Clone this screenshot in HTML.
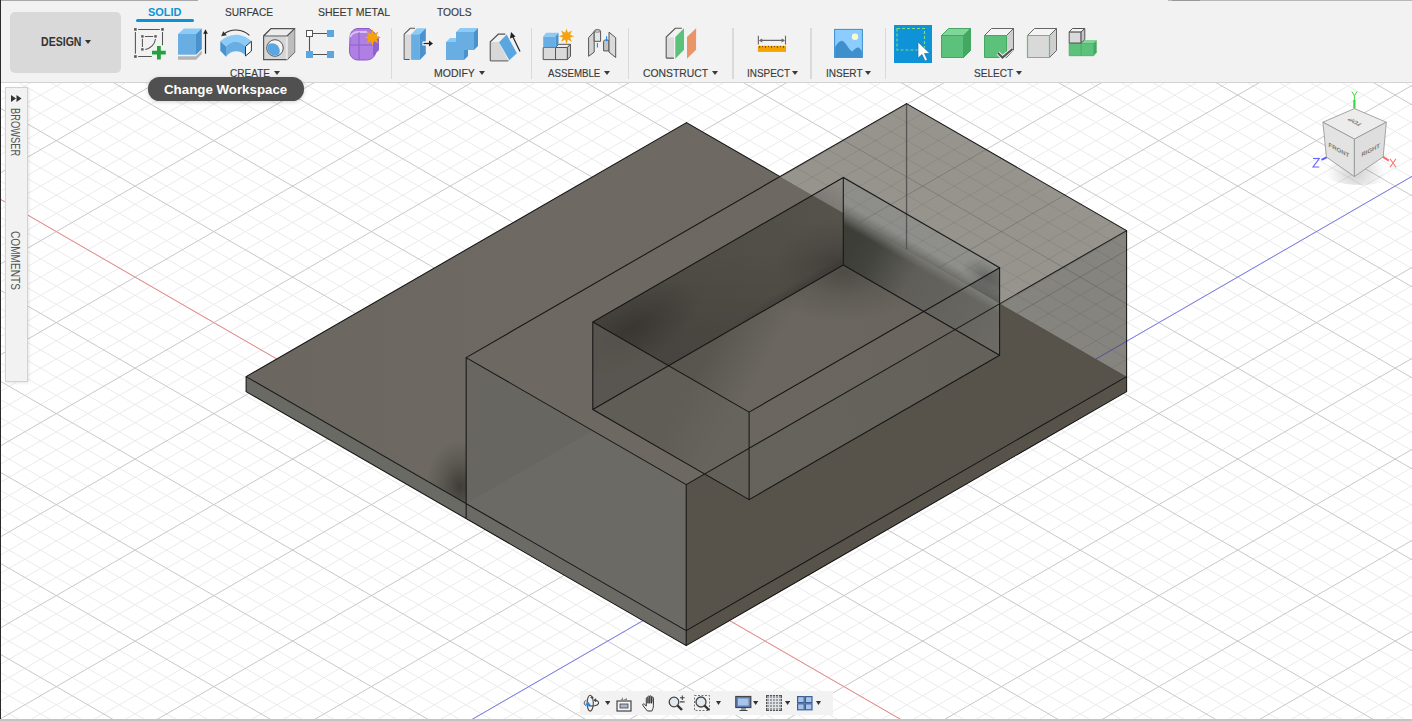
<!DOCTYPE html><html><head><meta charset="utf-8"><style>
html,body{margin:0;padding:0;width:1412px;height:721px;overflow:hidden;background:#fff;font-family:"Liberation Sans",sans-serif}
</style></head><body>
<div style="position:relative;width:1412px;height:721px;overflow:hidden">
<svg width="1412" height="636" viewBox="0 83 1412 636" style="position:absolute;left:0;top:83px">
<defs>
<linearGradient id="gPlateTop" gradientUnits="userSpaceOnUse" x1="246.1" y1="376.6" x2="1126.6" y2="376.6">
 <stop offset="0" stop-color="#6b6760"/><stop offset="0.35" stop-color="#6e6a63"/><stop offset="1" stop-color="#6d6962"/></linearGradient>
<radialGradient id="gAO1">
 <stop offset="0" stop-color="#2e2c29" stop-opacity="0.72"/><stop offset="0.5" stop-color="#2e2c29" stop-opacity="0.3"/><stop offset="1" stop-color="#2e2c29" stop-opacity="0"/></radialGradient>
<radialGradient id="gAO2">
 <stop offset="0" stop-color="#2e2c29" stop-opacity="0.36"/><stop offset="1" stop-color="#2e2c29" stop-opacity="0"/></radialGradient>
<linearGradient id="gZface" gradientUnits="userSpaceOnUse" x1="466" y1="400" x2="686" y2="600">
 <stop offset="0" stop-color="#656761"/><stop offset="1" stop-color="#6c6c67"/></linearGradient>
<linearGradient id="gBoxTop" gradientUnits="userSpaceOnUse" x1="466" y1="358" x2="906" y2="300">
 <stop offset="0" stop-color="#6d6862"/><stop offset="1" stop-color="#6d6862"/></linearGradient>
<linearGradient id="gFloor" gradientUnits="userSpaceOnUse" x1="592.8" y1="409.4" x2="999.6" y2="355.2">
 <stop offset="0" stop-color="#68645d"/><stop offset="0.45" stop-color="#6b6760"/><stop offset="1" stop-color="#69655e"/></linearGradient>
<linearGradient id="gFloor2" gradientUnits="userSpaceOnUse" x1="718.0" y1="337.2" x2="874.4" y2="427.4">
 <stop offset="0" stop-color="#000" stop-opacity="0.16"/><stop offset="0.3" stop-color="#000" stop-opacity="0"/></linearGradient>
<linearGradient id="gWallL" gradientUnits="userSpaceOnUse" x1="592.8" y1="321.9" x2="843.3" y2="177.5">
 <stop offset="0" stop-color="#4c4944"/><stop offset="0.3" stop-color="#4f4b45"/><stop offset="0.7" stop-color="#524e48"/><stop offset="1" stop-color="#57534d"/></linearGradient>
<linearGradient id="gWallL2" gradientUnits="userSpaceOnUse" x1="718.0" y1="249.7" x2="718.0" y2="337.2">
 <stop offset="0" stop-color="#000" stop-opacity="0"/><stop offset="1" stop-color="#000" stop-opacity="0.08"/></linearGradient>
<linearGradient id="gWallRbg" gradientUnits="userSpaceOnUse" x1="843.3" y1="177.5" x2="999.6" y2="267.7">
 <stop offset="0" stop-color="#8d8e8a"/><stop offset="0.5" stop-color="#8e8f8b"/><stop offset="1" stop-color="#8f908c"/></linearGradient>
<linearGradient id="gWallRpl" gradientUnits="userSpaceOnUse" x1="843.3" y1="265.0" x2="999.6" y2="355.2">
 <stop offset="0" stop-color="#3e3e39"/><stop offset="0.12" stop-color="#44443f"/><stop offset="0.36" stop-color="#5f5e59"/><stop offset="1" stop-color="#6c6b66"/></linearGradient>
<clipPath id="cpBoxBg"><polygon points="780.02,176.58 906.55,103.60 1126.60,230.60 1126.60,376.60"/></clipPath>
<clipPath id="cpPlateTop"><polygon points="246.10,376.60 686.50,122.60 780.02,176.58 466.15,357.60 466.15,503.60"/></clipPath>
<clipPath id="cpWallRbg"><polygon points="843.29,177.46 999.61,267.68 999.61,303.31 843.29,213.09"/></clipPath>
<linearGradient id="gWallLbg" gradientUnits="userSpaceOnUse" x1="843.3" y1="177.5" x2="823.3" y2="207.5">
 <stop offset="0" stop-color="#908d88"/><stop offset="1" stop-color="#7a7772"/></linearGradient>
<linearGradient id="gSoft" gradientUnits="userSpaceOnUse" x1="921.4" y1="258.2" x2="916.4" y2="266.9">
 <stop offset="0" stop-color="#8b8c88" stop-opacity="0.6"/><stop offset="1" stop-color="#8b8c88" stop-opacity="0"/></linearGradient>
<clipPath id="cpBelowBF"><polygon points="-0.00,880.36 1412.00,66.00 1412.00,721.00 0.00,721.00"/></clipPath>
<linearGradient id="gSoft2" gradientUnits="userSpaceOnUse" x1="921.4" y1="258.2" x2="926.4" y2="249.5">
 <stop offset="0" stop-color="#55544f" stop-opacity="0.55"/><stop offset="1" stop-color="#55544f" stop-opacity="0"/></linearGradient>
<clipPath id="cpFloor"><polygon points="592.79,409.44 843.29,264.96 999.61,355.18 749.11,499.66"/></clipPath>
<radialGradient id="gAO4"><stop offset="0" stop-color="#1e1c1a" stop-opacity="0.36"/><stop offset="0.5" stop-color="#1e1c1a" stop-opacity="0.14"/><stop offset="1" stop-color="#1e1c1a" stop-opacity="0"/></radialGradient>
<clipPath id="cpWallL"><polygon points="592.79,321.94 843.29,177.46 843.29,264.96 592.79,409.44"/></clipPath>
<radialGradient id="gAO3"><stop offset="0" stop-color="#252320" stop-opacity="0.42"/><stop offset="0.6" stop-color="#252320" stop-opacity="0.16"/><stop offset="1" stop-color="#252320" stop-opacity="0"/></radialGradient>
<clipPath id="cpWallR"><polygon points="843.29,177.46 999.61,267.68 999.61,355.18 843.29,264.96"/></clipPath>
<clipPath id="cpBelowPlateLine"><polygon points="0.00,-273.61 1412.00,541.32 1412.00,721.00 0.00,721.00"/></clipPath>
<clipPath id="cpAbovePlateLine"><polygon points="0.00,-273.61 1412.00,541.32 1412.00,0.00 0.00,0.00"/></clipPath>
</defs>
<rect x="0" y="83" width="1412" height="636" fill="#fff"/>
<path d="M0 -729.14L1412 86.62M0 -692.74L1412 123.02M0 -674.54L1412 141.22M0 -656.34L1412 159.42M0 -638.14L1412 177.62M0 -601.74L1412 214.02M0 -583.54L1412 232.22M0 -565.34L1412 250.42M0 -547.14L1412 268.62M0 -510.74L1412 305.02M0 -492.54L1412 323.22M0 -474.34L1412 341.42M0 -456.14L1412 359.62M0 -419.74L1412 396.02M0 -401.54L1412 414.22M0 -383.34L1412 432.42M0 -365.14L1412 450.62M0 -328.74L1412 487.02M0 -310.54L1412 505.22M0 -292.34L1412 523.42M0 -274.14L1412 541.62M0 -237.74L1412 578.02M0 -219.54L1412 596.22M0 -201.34L1412 614.42M0 -183.14L1412 632.62M0 -146.74L1412 669.02M0 -128.54L1412 687.22M0 -110.34L1412 705.42M0 -92.14L1412 723.62M0 -55.74L1412 760.02M0 -37.54L1412 778.22M0 -19.34L1412 796.42M0 -1.14L1412 814.62M0 35.26L1412 851.02M0 53.46L1412 869.22M0 71.66L1412 887.42M0 89.86L1412 905.62M0 126.26L1412 942.02M0 144.46L1412 960.22M0 162.66L1412 978.42M0 180.86L1412 996.62M0 217.26L1412 1033.02M0 235.46L1412 1051.22M0 253.66L1412 1069.42M0 271.86L1412 1087.62M0 308.26L1412 1124.02M0 326.46L1412 1142.22M0 344.66L1412 1160.42M0 362.86L1412 1178.62M0 399.26L1412 1215.02M0 417.46L1412 1233.22M0 435.66L1412 1251.42M0 453.86L1412 1269.62M0 490.26L1412 1306.02M0 508.46L1412 1324.22M0 526.66L1412 1342.42M0 544.86L1412 1360.62M0 581.26L1412 1397.02M0 599.46L1412 1415.22M0 617.66L1412 1433.42M0 635.86L1412 1451.62M0 672.26L1412 1488.02M0 690.46L1412 1506.22M0 708.66L1412 1524.42M0 100.34L1412 -715.42M0 118.54L1412 -697.22M0 136.74L1412 -679.02M0 154.94L1412 -660.82M0 191.34L1412 -624.42M0 209.54L1412 -606.22M0 227.74L1412 -588.02M0 245.94L1412 -569.82M0 282.34L1412 -533.42M0 300.54L1412 -515.22M0 318.74L1412 -497.02M0 336.94L1412 -478.82M0 373.34L1412 -442.42M0 391.54L1412 -424.22M0 409.74L1412 -406.02M0 427.94L1412 -387.82M0 464.34L1412 -351.42M0 482.54L1412 -333.22M0 500.74L1412 -315.02M0 518.94L1412 -296.82M0 555.34L1412 -260.42M0 573.54L1412 -242.22M0 591.74L1412 -224.02M0 609.94L1412 -205.82M0 646.34L1412 -169.42M0 664.54L1412 -151.22M0 682.74L1412 -133.02M0 700.94L1412 -114.82M0 737.34L1412 -78.42M0 755.54L1412 -60.22M0 773.74L1412 -42.02M0 791.94L1412 -23.82M0 828.34L1412 12.58M0 846.54L1412 30.78M0 864.74L1412 48.98M0 882.94L1412 67.18M0 919.34L1412 103.58M0 937.54L1412 121.78M0 955.74L1412 139.98M0 973.94L1412 158.18M0 1010.34L1412 194.58M0 1028.54L1412 212.78M0 1046.74L1412 230.98M0 1064.94L1412 249.18M0 1101.34L1412 285.58M0 1119.54L1412 303.78M0 1137.74L1412 321.98M0 1155.94L1412 340.18M0 1192.34L1412 376.58M0 1210.54L1412 394.78M0 1228.74L1412 412.98M0 1246.94L1412 431.18M0 1283.34L1412 467.58M0 1301.54L1412 485.78M0 1319.74L1412 503.98M0 1337.94L1412 522.18M0 1374.34L1412 558.58M0 1392.54L1412 576.78M0 1410.74L1412 594.98M0 1428.94L1412 613.18M0 1465.34L1412 649.58M0 1483.54L1412 667.78M0 1501.74L1412 685.98M0 1519.94L1412 704.18" stroke="#ebebeb" stroke-width="1" fill="none"/>
<path d="M0 -710.94L1412 104.82M0 -619.94L1412 195.82M0 -528.94L1412 286.82M0 -437.94L1412 377.82M0 -346.94L1412 468.82M0 -255.94L1412 559.82M0 -164.94L1412 650.82M0 -73.94L1412 741.82M0 17.06L1412 832.82M0 108.06L1412 923.82M0 199.06L1412 1014.82M0 290.06L1412 1105.82M0 381.06L1412 1196.82M0 472.06L1412 1287.82M0 563.06L1412 1378.82M0 654.06L1412 1469.82M0 82.14L1412 -733.62M0 173.14L1412 -642.62M0 264.14L1412 -551.62M0 355.14L1412 -460.62M0 446.14L1412 -369.62M0 537.14L1412 -278.62M0 628.14L1412 -187.62M0 719.14L1412 -96.62M0 810.14L1412 -5.62M0 901.14L1412 85.38M0 992.14L1412 176.38M0 1083.14L1412 267.38M0 1174.14L1412 358.38M0 1265.14L1412 449.38M0 1356.14L1412 540.38M0 1447.14L1412 631.38" stroke="#c8c8c8" stroke-width="1" fill="none"/>
<path d="M0 199.06L1412 1014.82" stroke="#f08a8a" stroke-width="1" fill="none"/>
<path d="M0 992.14L1412 176.38" stroke="#7d7df0" stroke-width="1" fill="none"/>
<polygon points="686.50,122.60 1126.60,376.60 686.20,630.60 246.10,376.60" fill="url(#gPlateTop)"/><polygon points="246.10,376.60 686.20,630.60 686.20,645.60 246.10,391.60" fill="#6a6a65"/><polygon points="686.20,630.60 1126.60,376.60 1126.60,391.60 686.20,645.60" fill="#57534b"/><polygon points="780.02,176.58 906.55,103.60 1126.60,230.60 1000.07,303.58" fill="#97948e"/><polygon points="1000.07,303.58 1126.60,230.60 1126.60,376.60" fill="#85847f"/><g clip-path="url(#cpBoxBg)"><path d="M0 -729.14L1412 86.62M0 -692.74L1412 123.02M0 -674.54L1412 141.22M0 -656.34L1412 159.42M0 -638.14L1412 177.62M0 -601.74L1412 214.02M0 -583.54L1412 232.22M0 -565.34L1412 250.42M0 -547.14L1412 268.62M0 -510.74L1412 305.02M0 -492.54L1412 323.22M0 -474.34L1412 341.42M0 -456.14L1412 359.62M0 -419.74L1412 396.02M0 -401.54L1412 414.22M0 -383.34L1412 432.42M0 -365.14L1412 450.62M0 -328.74L1412 487.02M0 -310.54L1412 505.22M0 -292.34L1412 523.42M0 -274.14L1412 541.62M0 -237.74L1412 578.02M0 -219.54L1412 596.22M0 -201.34L1412 614.42M0 -183.14L1412 632.62M0 -146.74L1412 669.02M0 -128.54L1412 687.22M0 -110.34L1412 705.42M0 -92.14L1412 723.62M0 -55.74L1412 760.02M0 -37.54L1412 778.22M0 -19.34L1412 796.42M0 -1.14L1412 814.62M0 35.26L1412 851.02M0 53.46L1412 869.22M0 71.66L1412 887.42M0 89.86L1412 905.62M0 126.26L1412 942.02M0 144.46L1412 960.22M0 162.66L1412 978.42M0 180.86L1412 996.62M0 217.26L1412 1033.02M0 235.46L1412 1051.22M0 253.66L1412 1069.42M0 271.86L1412 1087.62M0 308.26L1412 1124.02M0 326.46L1412 1142.22M0 344.66L1412 1160.42M0 362.86L1412 1178.62M0 399.26L1412 1215.02M0 417.46L1412 1233.22M0 435.66L1412 1251.42M0 453.86L1412 1269.62M0 490.26L1412 1306.02M0 508.46L1412 1324.22M0 526.66L1412 1342.42M0 544.86L1412 1360.62M0 581.26L1412 1397.02M0 599.46L1412 1415.22M0 617.66L1412 1433.42M0 635.86L1412 1451.62M0 672.26L1412 1488.02M0 690.46L1412 1506.22M0 708.66L1412 1524.42M0 100.34L1412 -715.42M0 118.54L1412 -697.22M0 136.74L1412 -679.02M0 154.94L1412 -660.82M0 191.34L1412 -624.42M0 209.54L1412 -606.22M0 227.74L1412 -588.02M0 245.94L1412 -569.82M0 282.34L1412 -533.42M0 300.54L1412 -515.22M0 318.74L1412 -497.02M0 336.94L1412 -478.82M0 373.34L1412 -442.42M0 391.54L1412 -424.22M0 409.74L1412 -406.02M0 427.94L1412 -387.82M0 464.34L1412 -351.42M0 482.54L1412 -333.22M0 500.74L1412 -315.02M0 518.94L1412 -296.82M0 555.34L1412 -260.42M0 573.54L1412 -242.22M0 591.74L1412 -224.02M0 609.94L1412 -205.82M0 646.34L1412 -169.42M0 664.54L1412 -151.22M0 682.74L1412 -133.02M0 700.94L1412 -114.82M0 737.34L1412 -78.42M0 755.54L1412 -60.22M0 773.74L1412 -42.02M0 791.94L1412 -23.82M0 828.34L1412 12.58M0 846.54L1412 30.78M0 864.74L1412 48.98M0 882.94L1412 67.18M0 919.34L1412 103.58M0 937.54L1412 121.78M0 955.74L1412 139.98M0 973.94L1412 158.18M0 1010.34L1412 194.58M0 1028.54L1412 212.78M0 1046.74L1412 230.98M0 1064.94L1412 249.18M0 1101.34L1412 285.58M0 1119.54L1412 303.78M0 1137.74L1412 321.98M0 1155.94L1412 340.18M0 1192.34L1412 376.58M0 1210.54L1412 394.78M0 1228.74L1412 412.98M0 1246.94L1412 431.18M0 1283.34L1412 467.58M0 1301.54L1412 485.78M0 1319.74L1412 503.98M0 1337.94L1412 522.18M0 1374.34L1412 558.58M0 1392.54L1412 576.78M0 1410.74L1412 594.98M0 1428.94L1412 613.18M0 1465.34L1412 649.58M0 1483.54L1412 667.78M0 1501.74L1412 685.98M0 1519.94L1412 704.18" stroke="#000" stroke-opacity="0.07" stroke-width="1" fill="none"/><path d="M0 -710.94L1412 104.82M0 -619.94L1412 195.82M0 -528.94L1412 286.82M0 -437.94L1412 377.82M0 -346.94L1412 468.82M0 -255.94L1412 559.82M0 -164.94L1412 650.82M0 -73.94L1412 741.82M0 17.06L1412 832.82M0 108.06L1412 923.82M0 199.06L1412 1014.82M0 290.06L1412 1105.82M0 381.06L1412 1196.82M0 472.06L1412 1287.82M0 563.06L1412 1378.82M0 654.06L1412 1469.82M0 82.14L1412 -733.62M0 173.14L1412 -642.62M0 264.14L1412 -551.62M0 355.14L1412 -460.62M0 446.14L1412 -369.62M0 537.14L1412 -278.62M0 628.14L1412 -187.62M0 719.14L1412 -96.62M0 810.14L1412 -5.62M0 901.14L1412 85.38M0 992.14L1412 176.38M0 1083.14L1412 267.38M0 1174.14L1412 358.38M0 1265.14L1412 449.38M0 1356.14L1412 540.38M0 1447.14L1412 631.38" stroke="#000" stroke-opacity="0.16" stroke-width="1" fill="none"/><path d="M0 992.14L1412 176.38" stroke="#3a3ad0" stroke-opacity="0.5" stroke-width="1" fill="none"/></g><polygon points="1000.07,303.58 1126.60,376.60 1126.60,391.60 686.20,645.60 686.20,484.60" fill="#57534b"/><polygon points="466.15,357.60 686.20,484.60 686.20,645.60 466.15,518.60" fill="#676661"/><polygon points="466.15,503.60 592.68,430.62 686.20,484.60 686.20,645.60 466.15,518.60" fill="#6b6a65"/><polygon points="466.15,357.60 780.02,176.58 1000.07,303.58 686.20,484.60" fill="url(#gBoxTop)"/><g clip-path="url(#cpPlateTop)"><ellipse cx="460.1" cy="486.6" rx="34" ry="46" fill="url(#gAO1)"/></g><polygon points="592.79,409.44 843.29,264.96 999.61,355.18 749.11,499.66" fill="url(#gFloor)"/><polygon points="592.79,409.44 843.29,264.96 999.61,355.18 749.11,499.66" fill="url(#gFloor2)"/><g clip-path="url(#cpFloor)"><ellipse cx="843.3" cy="273.0" rx="90" ry="48" fill="url(#gAO4)"/></g><polygon points="592.79,321.94 843.29,177.46 843.29,264.96 592.79,409.44" fill="url(#gWallL)"/><polygon points="592.79,321.94 843.29,177.46 843.29,264.96 592.79,409.44" fill="url(#gWallL2)"/><g clip-path="url(#cpWallL)"><ellipse cx="632.8" cy="327.9" rx="75" ry="34" transform="rotate(-30 632.8 327.9)" fill="url(#gAO3)"/><ellipse cx="798.3" cy="291.0" rx="80" ry="9" transform="rotate(-30 798.3 291.0)" fill="url(#gAO2)"/></g><polygon points="812.41,195.27 843.29,177.46 843.29,213.09" fill="url(#gWallLbg)"/><g clip-path="url(#cpWallL)"><ellipse cx="843.3" cy="265.0" rx="70" ry="45" fill="url(#gAO4)"/></g><polygon points="843.29,177.46 999.61,267.68 999.61,303.31 843.29,213.09" fill="url(#gWallRbg)"/><g clip-path="url(#cpWallRbg)"><path d="M0 -729.14L1412 86.62M0 -692.74L1412 123.02M0 -674.54L1412 141.22M0 -656.34L1412 159.42M0 -638.14L1412 177.62M0 -601.74L1412 214.02M0 -583.54L1412 232.22M0 -565.34L1412 250.42M0 -547.14L1412 268.62M0 -510.74L1412 305.02M0 -492.54L1412 323.22M0 -474.34L1412 341.42M0 -456.14L1412 359.62M0 -419.74L1412 396.02M0 -401.54L1412 414.22M0 -383.34L1412 432.42M0 -365.14L1412 450.62M0 -328.74L1412 487.02M0 -310.54L1412 505.22M0 -292.34L1412 523.42M0 -274.14L1412 541.62M0 -237.74L1412 578.02M0 -219.54L1412 596.22M0 -201.34L1412 614.42M0 -183.14L1412 632.62M0 -146.74L1412 669.02M0 -128.54L1412 687.22M0 -110.34L1412 705.42M0 -92.14L1412 723.62M0 -55.74L1412 760.02M0 -37.54L1412 778.22M0 -19.34L1412 796.42M0 -1.14L1412 814.62M0 35.26L1412 851.02M0 53.46L1412 869.22M0 71.66L1412 887.42M0 89.86L1412 905.62M0 126.26L1412 942.02M0 144.46L1412 960.22M0 162.66L1412 978.42M0 180.86L1412 996.62M0 217.26L1412 1033.02M0 235.46L1412 1051.22M0 253.66L1412 1069.42M0 271.86L1412 1087.62M0 308.26L1412 1124.02M0 326.46L1412 1142.22M0 344.66L1412 1160.42M0 362.86L1412 1178.62M0 399.26L1412 1215.02M0 417.46L1412 1233.22M0 435.66L1412 1251.42M0 453.86L1412 1269.62M0 490.26L1412 1306.02M0 508.46L1412 1324.22M0 526.66L1412 1342.42M0 544.86L1412 1360.62M0 581.26L1412 1397.02M0 599.46L1412 1415.22M0 617.66L1412 1433.42M0 635.86L1412 1451.62M0 672.26L1412 1488.02M0 690.46L1412 1506.22M0 708.66L1412 1524.42M0 100.34L1412 -715.42M0 118.54L1412 -697.22M0 136.74L1412 -679.02M0 154.94L1412 -660.82M0 191.34L1412 -624.42M0 209.54L1412 -606.22M0 227.74L1412 -588.02M0 245.94L1412 -569.82M0 282.34L1412 -533.42M0 300.54L1412 -515.22M0 318.74L1412 -497.02M0 336.94L1412 -478.82M0 373.34L1412 -442.42M0 391.54L1412 -424.22M0 409.74L1412 -406.02M0 427.94L1412 -387.82M0 464.34L1412 -351.42M0 482.54L1412 -333.22M0 500.74L1412 -315.02M0 518.94L1412 -296.82M0 555.34L1412 -260.42M0 573.54L1412 -242.22M0 591.74L1412 -224.02M0 609.94L1412 -205.82M0 646.34L1412 -169.42M0 664.54L1412 -151.22M0 682.74L1412 -133.02M0 700.94L1412 -114.82M0 737.34L1412 -78.42M0 755.54L1412 -60.22M0 773.74L1412 -42.02M0 791.94L1412 -23.82M0 828.34L1412 12.58M0 846.54L1412 30.78M0 864.74L1412 48.98M0 882.94L1412 67.18M0 919.34L1412 103.58M0 937.54L1412 121.78M0 955.74L1412 139.98M0 973.94L1412 158.18M0 1010.34L1412 194.58M0 1028.54L1412 212.78M0 1046.74L1412 230.98M0 1064.94L1412 249.18M0 1101.34L1412 285.58M0 1119.54L1412 303.78M0 1137.74L1412 321.98M0 1155.94L1412 340.18M0 1192.34L1412 376.58M0 1210.54L1412 394.78M0 1228.74L1412 412.98M0 1246.94L1412 431.18M0 1283.34L1412 467.58M0 1301.54L1412 485.78M0 1319.74L1412 503.98M0 1337.94L1412 522.18M0 1374.34L1412 558.58M0 1392.54L1412 576.78M0 1410.74L1412 594.98M0 1428.94L1412 613.18M0 1465.34L1412 649.58M0 1483.54L1412 667.78M0 1501.74L1412 685.98M0 1519.94L1412 704.18" stroke="#000" stroke-opacity="0.06" stroke-width="1" fill="none"/><path d="M0 -710.94L1412 104.82M0 -619.94L1412 195.82M0 -528.94L1412 286.82M0 -437.94L1412 377.82M0 -346.94L1412 468.82M0 -255.94L1412 559.82M0 -164.94L1412 650.82M0 -73.94L1412 741.82M0 17.06L1412 832.82M0 108.06L1412 923.82M0 199.06L1412 1014.82M0 290.06L1412 1105.82M0 381.06L1412 1196.82M0 472.06L1412 1287.82M0 563.06L1412 1378.82M0 654.06L1412 1469.82M0 82.14L1412 -733.62M0 173.14L1412 -642.62M0 264.14L1412 -551.62M0 355.14L1412 -460.62M0 446.14L1412 -369.62M0 537.14L1412 -278.62M0 628.14L1412 -187.62M0 719.14L1412 -96.62M0 810.14L1412 -5.62M0 901.14L1412 85.38M0 992.14L1412 176.38M0 1083.14L1412 267.38M0 1174.14L1412 358.38M0 1265.14L1412 449.38M0 1356.14L1412 540.38M0 1447.14L1412 631.38" stroke="#000" stroke-opacity="0.14" stroke-width="1" fill="none"/></g><polygon points="843.29,213.09 999.61,303.31 999.61,355.18 843.29,264.96" fill="url(#gWallRpl)"/><g clip-path="url(#cpWallR)"><polygon points="843.29,213.09 999.61,303.31 999.61,317.31 843.29,227.09" fill="url(#gSoft)"/><polygon points="843.29,213.09 999.61,303.31 999.61,291.31 843.29,201.09" fill="url(#gSoft2)"/></g><g clip-path="url(#cpWallR)"><ellipse cx="985.6" cy="275.7" rx="26" ry="14" transform="rotate(30 985.6 275.7)" fill="url(#gAO2)"/></g><polygon points="592.79,321.94 749.11,412.16 749.11,499.66 592.79,409.44" fill="#66625b" fill-opacity="0.6"/><g clip-path="url(#cpBelowBF)"><polygon points="592.79,409.44 843.29,264.96 999.61,355.18 749.11,499.66" fill="#000" fill-opacity="0.04"/></g><g clip-path="url(#cpAbovePlateLine)"><polygon points="749.11,412.16 999.61,267.68 999.61,355.18 749.11,499.66" fill="#4f514d" fill-opacity="0.5"/></g>
<path d="M906.55 103.60L906.55 249.60" stroke="#555" stroke-width="1.3" fill="none"/>
<path d="M246.10 376.60L686.50 122.60M686.50 122.60L780.02 176.58M246.10 376.60L246.10 391.60M246.10 391.60L686.20 645.60M686.20 645.60L1126.60 391.60M1126.60 391.60L1126.60 376.60M246.10 376.60L686.20 630.60M686.20 630.60L1126.60 376.60M466.15 357.60L906.55 103.60M906.55 103.60L1126.60 230.60M1126.60 230.60L686.20 484.60M686.20 484.60L466.15 357.60M466.15 357.60L466.15 518.60M686.20 484.60L686.20 645.60M1126.60 230.60L1126.60 376.60M592.79 321.94L843.29 177.46M843.29 177.46L999.61 267.68M999.61 267.68L749.11 412.16M749.11 412.16L592.79 321.94M592.79 321.94L592.79 409.44M843.29 177.46L843.29 264.96M999.61 267.68L999.61 355.18M749.11 412.16L749.11 499.66M592.79 409.44L843.29 264.96M843.29 264.96L999.61 355.18M999.61 355.18L749.11 499.66M749.11 499.66L592.79 409.44" stroke="#161616" stroke-width="1.05" fill="none" stroke-linecap="round"/>
</svg>
<div style="position:absolute;left:0;top:0;width:1412px;height:82px;background:#f2f2f2;border-bottom:1px solid #d3d3d3"></div><div style="position:absolute;left:0;top:0;width:198px;height:1px;background:#a8a8a8"></div><div style="position:absolute;left:1168px;top:0;width:244px;height:1px;background:#b8b8b8"></div><div style="position:absolute;left:1172px;top:0;width:28px;height:1px;background:#999"></div><div style="position:absolute;left:10px;top:11.5px;width:111px;height:61px;border-radius:5px;background:#d9d9d9"></div><div style="position:absolute;left:40.50px;top:35.60px;font-size:12px;line-height:12px;white-space:nowrap;color:#333;font-weight:bold;transform:scaleX(0.8803);transform-origin:0 0;">DESIGN</div><svg style="position:absolute;left:84.5px;top:40px" width="6" height="4"><path d="M0 0H6L3.0 4Z" fill="#333"/></svg><div style="position:absolute;left:147.60px;top:7.18px;font-size:11.5px;line-height:11.5px;white-space:nowrap;color:#0a94d6;font-weight:bold;transform:scaleX(0.9533);transform-origin:0 0;">SOLID</div><div style="position:absolute;left:135.5px;top:19.2px;width:58.5px;height:3px;border-radius:1.5px;background:#0a94d6"></div><div style="position:absolute;left:225.40px;top:6.98px;font-size:11.5px;line-height:11.5px;white-space:nowrap;color:#3a3a3a;font-weight:normal;transform:scaleX(0.8837);transform-origin:0 0;-webkit-text-stroke:0.15px #3a3a3a">SURFACE</div><div style="position:absolute;left:318.40px;top:6.98px;font-size:11.5px;line-height:11.5px;white-space:nowrap;color:#3a3a3a;font-weight:normal;transform:scaleX(0.9135);transform-origin:0 0;-webkit-text-stroke:0.15px #3a3a3a">SHEET METAL</div><div style="position:absolute;left:437.00px;top:6.98px;font-size:11.5px;line-height:11.5px;white-space:nowrap;color:#3a3a3a;font-weight:normal;transform:scaleX(0.8949);transform-origin:0 0;-webkit-text-stroke:0.15px #3a3a3a">TOOLS</div><div style="position:absolute;left:390.5px;top:27.5px;width:1.5px;height:51px;background:#dadada"></div><div style="position:absolute;left:530.5px;top:27.5px;width:1.5px;height:51px;background:#dadada"></div><div style="position:absolute;left:627.5px;top:27.5px;width:1.5px;height:51px;background:#dadada"></div><div style="position:absolute;left:732.0px;top:27.5px;width:1.5px;height:51px;background:#dadada"></div><div style="position:absolute;left:810.2px;top:27.5px;width:1.5px;height:51px;background:#dadada"></div><div style="position:absolute;left:884.8px;top:27.5px;width:1.5px;height:51px;background:#dadada"></div><div style="position:absolute;left:229.80px;top:67.68px;font-size:11.5px;line-height:11.5px;white-space:nowrap;color:#3a3a3a;font-weight:normal;transform:scaleX(0.8735);transform-origin:0 0;-webkit-text-stroke:0.15px #3a3a3a">CREATE</div><svg style="position:absolute;left:273.5px;top:70.8px" width="6" height="4"><path d="M0 0H6L3.0 4Z" fill="#3a3a3a"/></svg><div style="position:absolute;left:433.60px;top:67.68px;font-size:11.5px;line-height:11.5px;white-space:nowrap;color:#3a3a3a;font-weight:normal;transform:scaleX(0.9123);transform-origin:0 0;-webkit-text-stroke:0.15px #3a3a3a">MODIFY</div><svg style="position:absolute;left:478.8px;top:70.8px" width="6" height="4"><path d="M0 0H6L3.0 4Z" fill="#3a3a3a"/></svg><div style="position:absolute;left:548.40px;top:67.68px;font-size:11.5px;line-height:11.5px;white-space:nowrap;color:#3a3a3a;font-weight:normal;transform:scaleX(0.8436);transform-origin:0 0;-webkit-text-stroke:0.15px #3a3a3a">ASSEMBLE</div><svg style="position:absolute;left:604.4px;top:70.8px" width="6" height="4"><path d="M0 0H6L3.0 4Z" fill="#3a3a3a"/></svg><div style="position:absolute;left:642.80px;top:67.68px;font-size:11.5px;line-height:11.5px;white-space:nowrap;color:#3a3a3a;font-weight:normal;transform:scaleX(0.9032);transform-origin:0 0;-webkit-text-stroke:0.15px #3a3a3a">CONSTRUCT</div><svg style="position:absolute;left:712.4px;top:70.8px" width="6" height="4"><path d="M0 0H6L3.0 4Z" fill="#3a3a3a"/></svg><div style="position:absolute;left:746.70px;top:67.68px;font-size:11.5px;line-height:11.5px;white-space:nowrap;color:#3a3a3a;font-weight:normal;transform:scaleX(0.8627);transform-origin:0 0;-webkit-text-stroke:0.15px #3a3a3a">INSPECT</div><svg style="position:absolute;left:791.5px;top:70.8px" width="6" height="4"><path d="M0 0H6L3.0 4Z" fill="#3a3a3a"/></svg><div style="position:absolute;left:825.50px;top:67.68px;font-size:11.5px;line-height:11.5px;white-space:nowrap;color:#3a3a3a;font-weight:normal;transform:scaleX(0.8698);transform-origin:0 0;-webkit-text-stroke:0.15px #3a3a3a">INSERT</div><svg style="position:absolute;left:865px;top:70.8px" width="6" height="4"><path d="M0 0H6L3.0 4Z" fill="#3a3a3a"/></svg><div style="position:absolute;left:973.50px;top:67.68px;font-size:11.5px;line-height:11.5px;white-space:nowrap;color:#3a3a3a;font-weight:normal;transform:scaleX(0.8740);transform-origin:0 0;-webkit-text-stroke:0.15px #3a3a3a">SELECT</div><svg style="position:absolute;left:1015.5px;top:70.8px" width="6" height="4"><path d="M0 0H6L3.0 4Z" fill="#3a3a3a"/></svg><svg style="position:absolute;left:134px;top:28px;overflow:visible" width="34" height="34" viewBox="0 0 34 34">
<g fill="none" stroke="#555" stroke-width="1.05">
<path d="M4.2 1.4H25.8M1.4 3.9V25.7M4.2 28.5H17.8M28.5 3.9V17.3"/>
<path d="M10.9 8.4H19.1M8.4 10.8V19M11.2 21.4C16.5 20.5 20.8 16.3 21.5 11"/>
</g>
<g fill="#555"><rect x="0.1" y="0.1" width="2.6" height="2.6"/><rect x="27.2" y="0.1" width="2.6" height="2.6"/><rect x="0.1" y="27.2" width="2.6" height="2.6"/>
<rect x="7.2" y="7.2" width="2.4" height="2.4"/><rect x="20.3" y="7.2" width="2.4" height="2.4"/><rect x="7.2" y="20.2" width="2.4" height="2.4"/></g>
<path d="M24.9 17.9V31.6M18 24.7H31.8" stroke="#22a13f" stroke-width="3.8"/>
</svg><svg style="position:absolute;left:178px;top:28px;overflow:visible" width="32" height="34" viewBox="0 0 32 34">
<path d="M0 28.2H18L23.8 22.5V26L18 31.7H0Z" fill="#b4b4b4"/>
<path d="M0 6H18V26.7H0Z" fill="#68aee3"/>
<path d="M0 6L6 0.4H23.8L18 6Z" fill="#8ccbf5"/>
<path d="M18 6L23.8 0.4V21L18 26.7Z" fill="#4a92cc"/>
<path d="M27.5 25.7V4" stroke="#222" stroke-width="1.2"/><path d="M25.2 5.8L27.5 1.2L29.8 5.8Z" fill="#222"/>
</svg><svg style="position:absolute;left:220px;top:28px;overflow:visible" width="34" height="34" viewBox="0 0 34 34">
<path d="M29.4 7.4C22 0.5 11 0.5 4 6" fill="none" stroke="#333" stroke-width="1.1"/><path d="M1.2 8.2L3.2 3.2L6.8 7.2Z" fill="#333"/>
<path d="M0.3 13.3C9 4.5 23 4.5 31.4 13.3L25.5 18.5C20 12 11 12 6 18.5Z" fill="#8ccbf5"/>
<path d="M6 18.5C11 12 20 12 25.5 18.5V27.5C20 21.5 11 22 6 28.7Z" fill="#68aee3"/>
<path d="M0.3 13.3L6 18.5V28.7L0.3 22.7Z" fill="#4a92cc"/>
<path d="M25.5 18.5L31.4 13.3V23L25.5 28Z" fill="#fff" stroke="#333" stroke-width="1"/>
</svg><svg style="position:absolute;left:263px;top:28px;overflow:visible" width="33" height="33" viewBox="0 0 33 33">
<path d="M0.6 8L8 0.6H31.6V24L24 31.6H0.6Z" fill="#d6d6d6" stroke="#555" stroke-width="1.2"/>
<path d="M24 8L31.6 0.6V24L24 31.6Z" fill="#bdbdbd"/>
<path d="M0.6 8H24V31.6" fill="none" stroke="#fff" stroke-width="1"/>
<path d="M0.6 8L8 0.6H31.6L24 8Z" fill="#ededed" stroke="#555" stroke-width="1.2" stroke-linejoin="round"/>
<defs><clipPath id="holeclip"><circle cx="12" cy="20" r="7.6"/></clipPath></defs>
<circle cx="12" cy="20" r="8.3" fill="#f4f4f4" stroke="#555" stroke-width="1"/>
<g clip-path="url(#holeclip)"><circle cx="9.0" cy="23.0" r="7.8" fill="#5aa6e0"/></g>
</svg><svg style="position:absolute;left:306px;top:30px;overflow:visible" width="29" height="29" viewBox="0 0 29 29">
<path d="M7 3.5H21M7 24.5H21M3.5 7V21" stroke="#555" stroke-width="1.1"/>
<rect x="0.5" y="0.5" width="6" height="6" fill="#fff" stroke="#555" stroke-width="1"/>
<rect x="21" y="0" width="7" height="7" fill="#5aa6e0"/><rect x="0" y="21" width="7" height="7" fill="#5aa6e0"/><rect x="21" y="21" width="7" height="7" fill="#5aa6e0"/>
</svg><svg style="position:absolute;left:349px;top:28px;overflow:visible" width="33" height="33" viewBox="0 0 33 33">
<path d="M1 9C1 4 5 0.5 9 0.5H20L27 6V22C27 28 23 32 17 32H9C4 32 0.5 28 0.5 23Z" fill="#b07fe4" stroke="#8a5bc8" stroke-width="1"/>
<path d="M1 9C3 5 6 4 9 4H18" fill="none" stroke="#d9c0f5" stroke-width="2"/>
<path d="M10 4V32M1 17H25" stroke="#8a5bc8" stroke-width="0.9"/>
<path d="M24 13L30 8V22L24 28Z" fill="#9060cf"/>
<path d="M23.5 1L25 6L29.5 3.5L27.5 8L32 9.5L27.5 11L29.5 15.5L25 13L23.5 18L22 13L17.5 15.5L19.5 11L15 9.5L19.5 8L17.5 3.5L22 6Z" fill="#f5a30c"/>
</svg><svg style="position:absolute;left:400px;top:24px;overflow:visible" width="34" height="38" viewBox="0 0 34 38">
<path d="M4.2 35.4V10.2L10.2 4.25H15M4.2 35.4H9.7" fill="none" stroke="#555" stroke-width="1.1"/>
<path d="M4.8 10.5H11V35H4.8Z" fill="#dadada"/>
<path d="M11.1 10.2H19.9V35.9H11.1Z" fill="#68aee3"/>
<path d="M11.1 10.2L16.8 4.25H25.8L19.9 10.2Z" fill="#8ccbf5"/>
<path d="M19.9 10.2L25.8 4.25V29.7L19.9 35.9Z" fill="#4a92cc"/>
<rect x="22.5" y="17.5" width="4" height="4" fill="#fff"/>
<path d="M23.5 19.5H30" stroke="#222" stroke-width="1.3"/><path d="M29 16.5L33 19.5L29 22.5Z" fill="#222"/>
</svg><svg style="position:absolute;left:446px;top:28px;overflow:visible" width="33" height="33" viewBox="0 0 33 33">
<path d="M10 4H28V22H10Z" fill="#68aee3"/><path d="M10 4L14 0H32L28 4Z" fill="#8ccbf5"/><path d="M28 4L32 0V18L28 22Z" fill="#4a92cc"/>
<path d="M0 14H18V32H0Z" fill="#68aee3"/><path d="M0 14L4 10H10V14Z" fill="#8ccbf5"/><path d="M18 22H22V28L18 32Z" fill="#4a92cc"/>
<path d="M10 14H28V22H18V14" fill="#68aee3"/>
</svg><svg style="position:absolute;left:489px;top:28px;overflow:visible" width="33" height="34" viewBox="0 0 33 34">
<path d="M1.3 32.8V13.7L9.3 6.2H16.3" fill="none" stroke="#555" stroke-width="1.2"/>
<path d="M1.3 32.8H19.4" stroke="#555" stroke-width="1.2"/>
<path d="M1.9 14H10L19 32.2H1.9Z" fill="#d8d8d8"/>
<path d="M10.1 14.2L17.7 6.6L27.9 25.2L20.3 32.3Z" fill="#5aa6e0"/>
<path d="M31 23.5L23.5 8" stroke="#222" stroke-width="1.2"/><path d="M22 4L21 10.5L26.5 8.5Z" fill="#222"/>
</svg><svg style="position:absolute;left:542px;top:28px;overflow:visible" width="34" height="34" viewBox="0 0 34 34">
<path d="M13.5 19.5L16.8 16.3H28.5L25.3 19.5Z" fill="#ececec" stroke="#555" stroke-width="1" stroke-linejoin="round"/>
<path d="M25.3 19.5L28.5 16.3V28.3L25.3 31.6Z" fill="#c4c4c4" stroke="#555" stroke-width="1" stroke-linejoin="round"/>
<path d="M1.2 19.5H25.3V31.6H1.2Z" fill="#dadada" stroke="#555" stroke-width="1"/>
<path d="M13.5 19.5V31.6" stroke="#555" stroke-width="1"/>
<path d="M1.2 8.4H13.5V19.5H1.2Z" fill="#68aee3"/><path d="M1.2 8.4L4.1 4.8H16.5L13.5 8.4Z" fill="#8ccbf5"/><path d="M13.5 8.4L16.5 4.8V16.3L13.5 19.5Z" fill="#4a92cc"/>
<path d="M24.5 0.4L25.9 4.8L29.9 2.6L28.1 6.8L32.3 8.2L28.1 9.6L29.9 13.8L25.9 11.6L24.5 16L23.1 11.6L19.1 13.8L20.9 9.6L16.7 8.2L20.9 6.8L19.1 2.6L23.1 4.8Z" fill="#f5a30c"/>
</svg><svg style="position:absolute;left:588px;top:28px;overflow:visible" width="30" height="34" viewBox="0 0 30 34">
<path d="M0.6 9.7L6.2 3.5V24.1L0.6 28.3Z" fill="#d4d4d4" stroke="#555" stroke-width="1" stroke-linejoin="round"/>
<path d="M6.2 3.2C6.2 1.4 12.6 1.4 12.6 3.2V13.3H6.2Z" fill="#e4e4e4" stroke="#555" stroke-width="1"/>
<ellipse cx="9.4" cy="3" rx="3.2" ry="1.1" fill="#f4f4f4" stroke="#555" stroke-width="0.8"/>
<path d="M15.6 13.2C15.6 11.4 21 11.4 21 13.2V22.9H15.6Z" fill="#c4c4c4" stroke="#555" stroke-width="1"/>
<path d="M21 4.2L27.7 9.7V29.5L21 24.1Z" fill="#dadada" stroke="#555" stroke-width="1" stroke-linejoin="round"/>
<path d="M9.4 15V19.5M18.6 8.2V13.3" stroke="#1e88e5" stroke-width="1.1"/>
</svg><svg style="position:absolute;left:665px;top:28px;overflow:visible" width="33" height="33" viewBox="0 0 33 33">
<path d="M1.8 9.3H9V29.5H1.8Z" fill="#dcdcdc"/>
<path d="M1.2 30.1V9L10.3 0.3H16.9M1.2 30.1H8.9" fill="none" stroke="#555" stroke-width="1.1"/>
<path d="M10.3 9L19 0.3V21.7L10.3 30.7Z" fill="#5cc17a"/>
<path d="M22 9L31.1 0.3V21.7L22 30.7Z" fill="#e8956a"/>
</svg><svg style="position:absolute;left:757px;top:35px;overflow:visible" width="30" height="18" viewBox="0 0 30 18">
<path d="M1.35 0.8V9.6M28.5 0.8V9.6M3 5.4H27" stroke="#666" stroke-width="1.1"/>
<path d="M1.8 5.4L5.2 3.4V7.4Z M28 5.4L24.6 3.4V7.4Z" fill="#666"/>
<path d="M0.9 10.9H29V16.9H0.9Z" fill="#f5a300"/>
<path d="M2.7 10.9V13M5.5 10.9V12.2M8.4 10.9V13M11.5 10.9V12.2M14.5 10.9V13M17.5 10.9V12.2M20.4 10.9V13M23.5 10.9V12.2M26.5 10.9V13" stroke="#6a4a10" stroke-width="0.9"/>
</svg><svg style="position:absolute;left:834px;top:28px;overflow:visible" width="30" height="31" viewBox="0 0 30 31">
<rect x="0.6" y="1.4" width="27.8" height="28" fill="#8ccdff" stroke="#3d8ed0" stroke-width="1"/>
<circle cx="21" cy="8.7" r="3.2" fill="#fffbd0"/>
<path d="M1.1 18.9C4 14 7 12 8.6 12.9C12 14 15 22 18.3 23.5C20 22 22 19.2 23.8 19.4C25.5 19.5 27 21 27.9 23.5V29.4H1.1Z" fill="#3f8fcc"/>
</svg><svg style="position:absolute;left:894px;top:25px;overflow:visible" width="38" height="38" viewBox="0 0 38 38">
<rect x="0" y="0" width="38" height="38" fill="#0f93d8"/>
<rect x="3" y="3.5" width="27.5" height="21.5" fill="none" stroke="#7ee07a" stroke-width="1.1" stroke-dasharray="3,2"/>
<path d="M24 17V33L28 29.5L31 36L33.5 35L30.5 28.5H36Z" fill="#fff" stroke="#0b6aa0" stroke-width="0.6"/>
</svg><svg style="position:absolute;left:941px;top:28px;overflow:visible" width="30" height="30" viewBox="0 0 30 30">
<path d="M0.5 7.5H22.5V29.5H0.5Z" fill="#5cc17a" stroke="#45a862" stroke-width="1"/>
<path d="M0.5 7.5L7.5 0.5H29.5L22.5 7.5Z" fill="#7fd59a" stroke="#45a862" stroke-width="1"/>
<path d="M22.5 7.5L29.5 0.5V22.5L22.5 29.5Z" fill="#45a862" stroke="#45a862" stroke-width="1"/>
</svg><svg style="position:absolute;left:984px;top:28px;overflow:visible" width="30" height="31" viewBox="0 0 30 31">
<path d="M0.5 7.5L7.5 0.5H29.5L22.5 7.5Z" fill="#f4f4f4" stroke="#666" stroke-width="1"/>
<path d="M22.5 7.5L29.5 0.5V22.5L22.5 29.5Z" fill="#cfcfcf" stroke="#666" stroke-width="1"/>
<path d="M0.5 7.5H22.5V29.5H0.5Z" fill="#5cc17a" stroke="#45a862" stroke-width="1"/>
<path d="M14 25L18.5 29.5L28.5 21" fill="none" stroke="#f1f1f1" stroke-width="4"/>
<path d="M14 25L18.5 29.5L28.5 21" fill="none" stroke="#555" stroke-width="2.2"/>
</svg><svg style="position:absolute;left:1027px;top:28px;overflow:visible" width="30" height="30" viewBox="0 0 30 30">
<path d="M0.5 7.5L7.5 0.5H29.5L22.5 7.5Z" fill="#f4f4f4" stroke="#666" stroke-width="1"/>
<path d="M22.5 7.5L29.5 0.5V22.5L22.5 29.5Z" fill="#cfcfcf" stroke="#666" stroke-width="1"/>
<path d="M0.5 7.5H22.5V29.5H0.5Z" fill="#d9d9d9" stroke="#5cc17a" stroke-width="1.2"/>
</svg><svg style="position:absolute;left:1068px;top:28px;overflow:visible" width="30" height="30" viewBox="0 0 30 30">
<path d="M1.2 15H25.7V27.7H1.2Z" fill="#5cc17a" stroke="#45a862" stroke-width="0.8"/>
<path d="M13.1 15V27.7" stroke="#45a862" stroke-width="0.8"/>
<path d="M13.1 15L16.8 12.1H28.7L25.7 15Z" fill="#7fd59a"/>
<path d="M25.7 15L28.7 12.1V24.6L25.7 27.7Z" fill="#45a862"/>
<path d="M1.2 3.9H13.1V15H1.2Z" fill="#d9d9d9" stroke="#555" stroke-width="1"/>
<path d="M1.2 3.9L4.4 0.5H16.8L13.1 3.9Z" fill="#f4f4f4" stroke="#555" stroke-width="1" stroke-linejoin="round"/>
<path d="M13.1 3.9L16.8 0.5V11.6L13.1 15Z" fill="#c4c4c4" stroke="#555" stroke-width="1" stroke-linejoin="round"/>
</svg>
<div style="position:absolute;left:0;top:0;width:1px;height:721px;background:#2a2a2a"></div><div style="position:absolute;left:4.5px;top:86.5px;width:23px;height:295px;background:#f2f2f2;border:1px solid #d2d2d2;box-sizing:border-box;box-shadow:1px 1px 3px rgba(0,0,0,0.10)"></div><svg style="position:absolute;left:11px;top:95px" width="11" height="7"><path d="M0 0L5 3.5L0 7ZM5.5 0L10.5 3.5L5.5 7Z" fill="#333"/></svg><div style="position:absolute;left:21px;top:107.8px;width:0;height:0"><div style="position:absolute;left:0;top:0;transform:rotate(90deg) scaleX(0.776);transform-origin:0 0;font-size:12px;line-height:12px;color:#555;white-space:nowrap">BROWSER</div></div><div style="position:absolute;left:21.3px;top:231.1px;width:0;height:0"><div style="position:absolute;left:0;top:0;transform:rotate(90deg) scaleX(0.843);transform-origin:0 0;font-size:12px;line-height:12px;color:#555;white-space:nowrap">COMMENTS</div></div>
<svg style="position:absolute;left:1300px;top:85px" width="112" height="100" viewBox="1300 85 112 100">
<defs><radialGradient id="cshadow" cx="1356" cy="172" r="30" gradientUnits="userSpaceOnUse"><stop offset="0" stop-color="#000" stop-opacity="0.18"/><stop offset="1" stop-color="#000" stop-opacity="0"/></radialGradient></defs>
<ellipse cx="1360" cy="172" rx="36" ry="13" fill="url(#cshadow)"/>
<path d="M1354.4 100V108.6" stroke="#3ed63e" stroke-width="2.2"/>
<path d="M1321.5 159.9L1327 157.1" stroke="#5a5aff" stroke-width="2"/>
<path d="M1383 156.8L1388.8 160.6" stroke="#ff6a6a" stroke-width="2"/>
<path d="M1354.4 108.6L1386.3 122.2L1354.4 139.1L1322.9 122.2Z" fill="#ececec" stroke="#909090" stroke-width="0.8"/>
<path d="M1322.9 122.2L1354.4 139.1V176.5L1326.4 157.1Z" fill="#e3e3e3" stroke="#909090" stroke-width="0.8"/>
<path d="M1354.4 139.1L1386.3 122.2L1383.2 156.8L1354.4 176.5Z" fill="#dedede" stroke="#909090" stroke-width="0.8"/>
<text x="0" y="0" font-size="6" fill="#7a7a7a" font-weight="bold" transform="matrix(1 0.537 0 1 1328.5 146.6)">FRONT</text>
<text x="0" y="0" font-size="6" fill="#7a7a7a" font-weight="bold" transform="matrix(1 -0.53 0 1 1361.4 157.1)">RIGHT</text>
<text x="0" y="0" font-size="6" fill="#7a7a7a" font-weight="bold" transform="matrix(-1 -0.537 1 -0.43 1363 124.4)">TOP</text>
<path d="M1351.8 91.5L1354.4 95.8L1357 91.5M1354.4 95.8V100.5" stroke="#3ed63e" stroke-width="1" fill="none"/>
<path d="M1313 158.5H1319.3L1313 167H1319.3" stroke="#6464ff" stroke-width="1.1" fill="none"/>
<path d="M1390 158.8L1396 167.2M1396 158.8L1390 167.2" stroke="#ff7070" stroke-width="1.1" fill="none"/>
</svg>
<div style="position:absolute;left:580px;top:691px;width:253px;height:23.5px;background:#f2f2f2"></div><div style="position:absolute;left:0;top:719px;width:1412px;height:2px;background:#c4c4c4"></div><svg style="position:absolute;left:583px;top:694.5px;overflow:visible" width="17" height="17" viewBox="0 0 17 17"><path d="M3.2 5.3C0.6 6.5 0.6 9.6 3.2 10.8" fill="none" stroke="#444" stroke-width="1"/>
<ellipse cx="7.2" cy="8.2" rx="3.1" ry="7.9" fill="none" stroke="#444" stroke-width="1.1"/>
<path d="M5.5 10.5C9 11.5 14.5 11 15.5 8.5C16.3 6.5 13.5 5 11 5.2" fill="none" stroke="#444" stroke-width="1.1"/>
<path d="M7.5 2.5H10.5M9 1V4M11 5.2L12.8 3.8V6.6Z" stroke="#444" stroke-width="0.9" fill="#444"/>
<path d="M2.8 9.2H7.2M5 7V11.4" stroke="#1e88e5" stroke-width="1.6"/></svg><svg style="position:absolute;left:604.5px;top:701px" width="5.5" height="4"><path d="M0 0H5.5L2.75 4Z" fill="#333"/></svg><svg style="position:absolute;left:616px;top:694.5px;overflow:visible" width="17" height="17" viewBox="0 0 17 17"><rect x="1" y="6" width="14" height="10" fill="#f4f4f4" stroke="#444" stroke-width="1.2"/><rect x="4" y="9" width="8" height="4" fill="#a9b4c8" stroke="#444" stroke-width="0.8"/><path d="M4 6L7 2V5L11 3V6" fill="#888"/></svg><svg style="position:absolute;left:642px;top:694.5px;overflow:visible" width="17" height="17" viewBox="0 0 17 17"><path d="M5.5 16C4 14.5 2.2 12 0.8 10.2C0.3 9.4 1.5 8.4 2.4 9.2L4.3 11V3.3C4.3 2.3 6 2.3 6 3.3V8.3V1.7C6 0.7 7.8 0.7 7.8 1.7V8.3V1.6C7.8 0.6 9.6 0.6 9.6 1.6V8.3V2.9C9.6 1.9 11.4 1.9 11.4 2.9V10.5C11.4 13 10.6 14.6 9.8 16Z" fill="#f6f6f6" stroke="#333" stroke-width="1"/>
<path d="M6.9 2V7M8.7 2V7M10.5 3.2V7" stroke="#777" stroke-width="0.6"/></svg><svg style="position:absolute;left:668px;top:694.5px;overflow:visible" width="17" height="17" viewBox="0 0 17 17"><circle cx="6" cy="7" r="4.8" fill="#dfe9ee" stroke="#444" stroke-width="1.3"/><path d="M9.5 10.5L14 15" stroke="#333" stroke-width="2.4"/><path d="M12 2.8H16.6M14.3 0.5V5.1M12 6.9H16.6" stroke="#444" stroke-width="1.1"/></svg><svg style="position:absolute;left:694px;top:694.5px;overflow:visible" width="17" height="17" viewBox="0 0 17 17"><rect x="0.5" y="0.5" width="15" height="15" fill="none" stroke="#555" stroke-width="0.8" stroke-dasharray="2,1.5"/><circle cx="7" cy="7" r="5" fill="#dfe9ee" stroke="#444" stroke-width="1.3"/><path d="M10.5 10.5L15 15" stroke="#333" stroke-width="2.4"/></svg><svg style="position:absolute;left:716px;top:701px" width="5" height="4"><path d="M0 0H5L2.5 4Z" fill="#333"/></svg><svg style="position:absolute;left:735px;top:694.5px;overflow:visible" width="17" height="17" viewBox="0 0 17 17"><rect x="0.8" y="1.5" width="15" height="11" fill="#5d86c2" stroke="#444" stroke-width="1.2"/><rect x="3" y="3.5" width="10.5" height="7" fill="#a8c4ea"/><path d="M6 14H11M4.5 15.5H12.5" stroke="#444" stroke-width="1.2"/></svg><svg style="position:absolute;left:753.3px;top:701px" width="5.3" height="4"><path d="M0 0H5.3L2.65 4Z" fill="#333"/></svg><svg style="position:absolute;left:766px;top:694.5px;overflow:visible" width="17" height="17" viewBox="0 0 17 17"><rect x="0.5" y="0.5" width="15" height="15" fill="#9aa0aa" stroke="#555" stroke-width="1"/><path d="M3.5 0V16M6.5 0V16M9.5 0V16M12.5 0V16M0 3.5H16M0 6.5H16M0 9.5H16M0 12.5H16" stroke="#e6e6e6" stroke-width="0.9"/></svg><svg style="position:absolute;left:784.8px;top:701px" width="5.2" height="4"><path d="M0 0H5.2L2.6 4Z" fill="#333"/></svg><svg style="position:absolute;left:797px;top:694.5px;overflow:visible" width="17" height="17" viewBox="0 0 17 17"><rect x="0.6" y="1.6" width="6.6" height="6" fill="#a8c4ea" stroke="#3d5f96" stroke-width="1.2"/><rect x="8.4" y="1.6" width="6.6" height="6" fill="#a8c4ea" stroke="#3d5f96" stroke-width="1.2"/><rect x="0.6" y="8.8" width="6.6" height="6" fill="#a8c4ea" stroke="#3d5f96" stroke-width="1.2"/><rect x="8.4" y="8.8" width="6.6" height="6" fill="#a8c4ea" stroke="#3d5f96" stroke-width="1.2"/></svg><svg style="position:absolute;left:816px;top:701px" width="5" height="4"><path d="M0 0H5L2.5 4Z" fill="#333"/></svg>
<div style="position:absolute;left:148px;top:77px;width:156px;height:23.5px;border-radius:11.5px;background:#505050;box-shadow:0 1px 4px rgba(0,0,0,0.18)"></div><div style="position:absolute;left:164.30px;top:82.94px;font-size:13px;line-height:13px;white-space:nowrap;color:#fff;font-weight:bold;transform:scaleX(1.0232);transform-origin:0 0;">Change Workspace</div>
</div></body></html>
